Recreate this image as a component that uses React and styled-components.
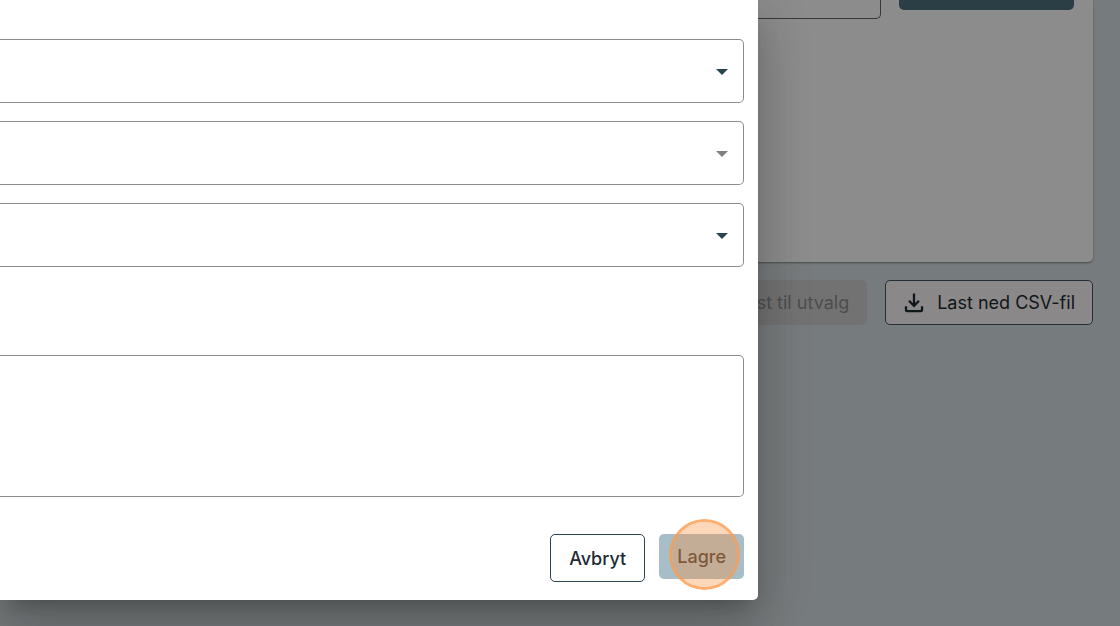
import React, { useState } from 'react';
import styled, { createGlobalStyle } from 'styled-components';

const INK = '#1d2b32';
const PETROL = '#2b4550';
const OUTLINE = '#8c8c8c';

const GlobalStyle = createGlobalStyle`
	* {
		box-sizing: border-box;
	}

	body {
		margin: 0;
		background: #d8e0e3;
		font-family: Inter, 'Liberation Sans', sans-serif;
		color: ${INK};
	}

	button,
	input,
	select,
	textarea {
		font: inherit;
		color: inherit;
	}
`;

const DownloadIcon = () => (
	<svg width='20' height='20' viewBox='0 0 20 20' fill='none' stroke='currentColor' strokeWidth='2.3' aria-hidden='true'>
		<path d='M10 .5v12M5 7.8l5 5 5-5' />
		<path d='M2 13.2v4a1 1 0 0 0 1 1h14a1 1 0 0 0 1-1v-4' />
	</svg>
);

const SelectField = ({ label, disabled }) => (
	<SelectBox $disabled={disabled}>
		<select aria-label={label} disabled={disabled}>
			<option value='' />
		</select>
		<svg width='12' height='6' viewBox='0 0 12 6' aria-hidden='true'>
			<path d='M0 0h12L6 6z' fill='currentColor' />
		</svg>
	</SelectBox>
);

export default function App() {
	const [comment, setComment] = useState('');

	return (
		<>
			<GlobalStyle />
			<Page>
				<Card>
					<SearchRow>
						<SearchInput type='text' aria-label='Søk' />
						<SearchButton type='button' aria-label='Søk' />
					</SearchRow>
				</Card>
				<ListActions>
					<ListButton type='button' disabled>
						st til utvalg
					</ListButton>
					<ListButton type='button'>
						<DownloadIcon />
						Last ned CSV-fil
					</ListButton>
				</ListActions>
			</Page>
			<Backdrop>
				<Dialog role='dialog' aria-modal='true' aria-label='Lagre'>
					<Fields>
						<SelectField label='Kategori' />
						<SelectField label='Underkategori' disabled />
						<SelectField label='Status' />
					</Fields>
					<CommentArea
						aria-label='Kommentar'
						value={comment}
						onChange={event => setComment(event.target.value)}
					/>
					<DialogActions>
						<CancelButton type='button'>Avbryt</CancelButton>
						<SaveButton type='button'>
							Lagre
							<ClickMarker />
						</SaveButton>
					</DialogActions>
				</Dialog>
			</Backdrop>
		</>
	);
}

const Page = styled.main`
	display: flex;
	flex-direction: column;
	gap: 18px;
	padding-right: 27px;
`;

const Card = styled.section`
	min-height: 262px;
	padding-right: 19px;
	background: white;
	border-bottom-right-radius: 5px;
	box-shadow: 0 1px 2px rgba(0, 0, 0, 0.4);
`;

const SearchRow = styled.div`
	display: flex;
	align-items: flex-start;
	gap: 18px;
`;

const SearchInput = styled.input`
	flex: 1;
	min-width: 0;
	height: 19px;
	background: white;
	border: 1px solid #666;
	border-width: 0 1px 1px 0;
	border-bottom-right-radius: 5px;
`;

const SearchButton = styled.button`
	width: 175px;
	height: 10px;
	padding: 0;
	border: none;
	border-radius: 0 0 5px 5px;
	background: #50717f;
`;

const ListActions = styled.div`
	display: flex;
	justify-content: flex-end;
	gap: 18px;
`;

const ListButton = styled.button`
	display: flex;
	align-items: center;
	gap: 13px;
	height: 45px;
	padding: 0 17px 0 18px;
	border: 1px solid #3f5663;
	border-radius: 5px;
	background: #fcf8f7;
	font-size: 18px;
	white-space: nowrap;

	&:disabled {
		border-color: transparent;
		background: #d0d0d0;
		color: #8d8d8d;
	}
`;

const Backdrop = styled.div`
	position: fixed;
	inset: 0;
	display: flex;
	align-items: flex-start;
	padding-right: 362px;
	background: rgba(0, 0, 0, 0.45);
`;

const Dialog = styled.div`
	flex: 1;
	min-width: 0;
	padding: 39px 14px 18px 0;
	background: white;
	border-bottom-right-radius: 5px;
	box-shadow:
		0 14px 20px -9px rgba(0, 0, 0, 0.2),
		0 32px 50px 4px rgba(0, 0, 0, 0.14),
		0 12px 60px 10px rgba(0, 0, 0, 0.12);
`;

const Fields = styled.div`
	display: flex;
	flex-direction: column;
	gap: 18px;
`;

const SelectBox = styled.div`
	position: relative;
	display: flex;
	color: ${({ $disabled }) => ($disabled ? '#808080' : PETROL)};

	select {
		width: 100%;
		height: 64px;
		padding: 0 40px 0 16px;
		appearance: none;
		background: white;
		border: 1px solid ${OUTLINE};
		border-left: none;
		border-radius: 0 5px 5px 0;
		opacity: 1;
	}

	svg {
		position: absolute;
		top: 30px;
		right: 16px;
		pointer-events: none;
	}
`;

const CommentArea = styled.textarea`
	display: block;
	width: 100%;
	height: 142px;
	margin-top: 88px;
	padding: 16px;
	border: 1px solid ${OUTLINE};
	border-left: none;
	border-radius: 0 5px 5px 0;
	resize: none;
`;

const DialogActions = styled.div`
	display: flex;
	justify-content: flex-end;
	align-items: flex-start;
	gap: 14px;
	margin-top: 37px;
`;

const DialogButton = styled.button`
	border-radius: 5px;
	font-size: 18px;
	font-weight: 500;
`;

const CancelButton = styled(DialogButton)`
	height: 48px;
	padding: 0 18px;
	border: 1px solid ${PETROL};
	background: white;
`;

const SaveButton = styled(DialogButton)`
	position: relative;
	height: 45px;
	padding: 0 18px;
	border: none;
	background: #a7bec8;
	color: #37393b;
`;

const ClickMarker = styled.span`
	position: absolute;
	top: -15px;
	left: 10px;
	width: 71px;
	height: 71px;
	border: 3px solid rgba(252, 155, 79, 0.8);
	border-radius: 50%;
	background: rgba(250, 145, 60, 0.36);
	background-clip: padding-box;
	pointer-events: none;
`;
